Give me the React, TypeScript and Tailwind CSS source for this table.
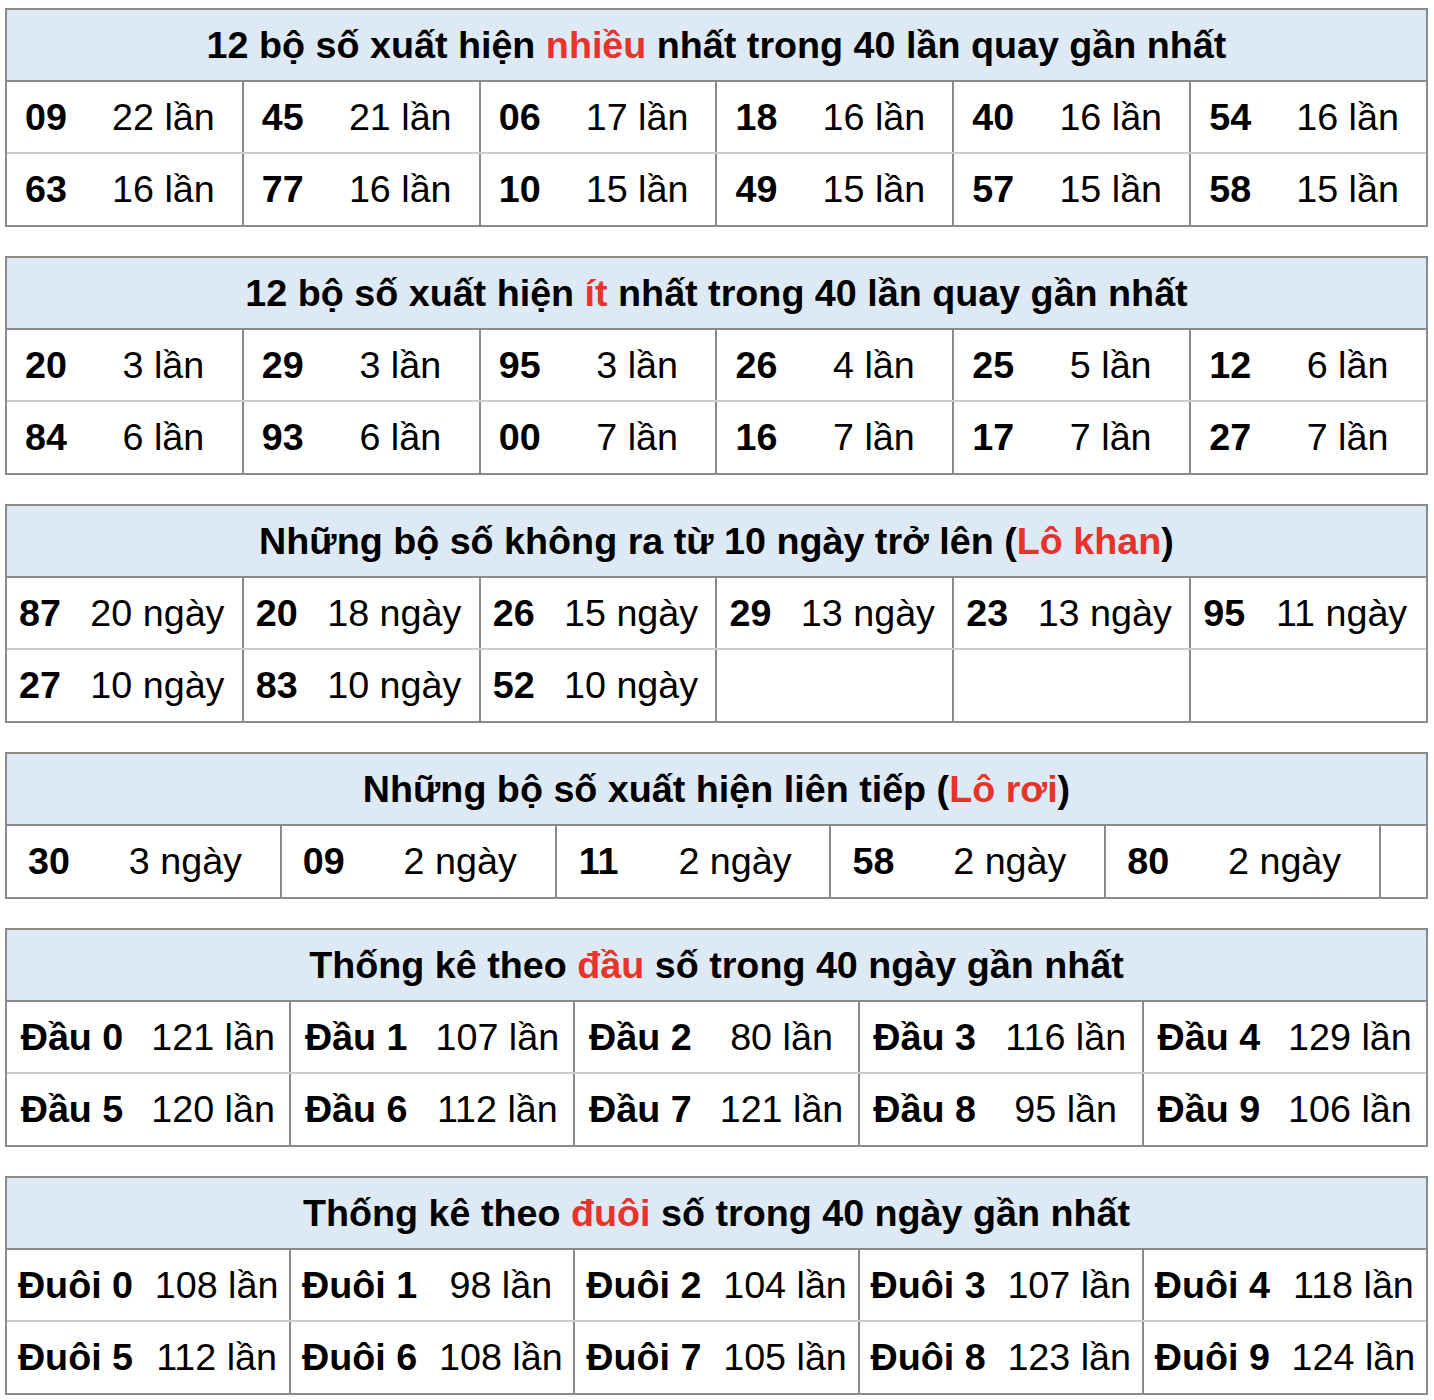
import React from 'react';

type Item = [string, string];

const font = { fontFamily: '"Liberation Sans", Arial, sans-serif' };

const Title = ({ pre, hot, post }: { pre: string; hot: string; post: string }) => (
  <div className="h-[72px] bg-[#ddeaf6] border-b-2 border-[#8a8a8a] flex items-center justify-center text-[37.7px] font-bold text-black">
    <span>
      {pre}
      <span className="text-[#e8332a]">{hot}</span>
      {post}
    </span>
  </div>
);

const Row = ({
  items,
  slots,
  numW,
  last,
  tail,
}: {
  items: (Item | null)[];
  slots: number;
  numW: string;
  last?: boolean;
  tail?: boolean;
}) => (
  <div className={`flex ${last ? 'h-[71px]' : 'h-[72px] border-b-2 border-[#cccccc]'}`}>
    {Array.from({ length: slots }).map((_, i) => {
      const it = items[i];
      return (
        <div
          key={i}
          className={`flex-1 flex items-center text-[37.7px] text-black ${i > 0 ? 'border-l-2 border-[#8a8a8a]' : ''}`}
        >
          {it && (
            <>
              <div className={`${numW} shrink-0 text-center font-bold`}>{it[0]}</div>
              <div className="flex-1 text-center whitespace-nowrap">{it[1]}</div>
            </>
          )}
        </div>
      );
    })}
    {tail && <div className="w-[47px] shrink-0 border-l-2 border-[#8a8a8a]" />}
  </div>
);

const Table = ({
  pre,
  hot,
  post,
  rows,
  slots,
  numW,
  tail,
}: {
  pre: string;
  hot: string;
  post: string;
  rows: (Item | null)[][];
  slots: number;
  numW: string;
  tail?: boolean;
}) => (
  <div className="border-2 border-[#8a8a8a] bg-white">
    <Title pre={pre} hot={hot} post={post} />
    {rows.map((r, i) => (
      <Row key={i} items={r} slots={slots} numW={numW} last={i === rows.length - 1} tail={tail} />
    ))}
  </div>
);

const L = (n: string, c: string | number): Item => [n, `${c} lần`];
const N = (n: string, c: number): Item => [n, `${c} ngày`];

export default function App() {
  const most = [
    [L('09', 22), L('45', 21), L('06', 17), L('18', 16), L('40', 16), L('54', 16)],
    [L('63', 16), L('77', 16), L('10', 15), L('49', 15), L('57', 15), L('58', 15)],
  ];
  const least = [
    [L('20', 3), L('29', 3), L('95', 3), L('26', 4), L('25', 5), L('12', 6)],
    [L('84', 6), L('93', 6), L('00', 7), L('16', 7), L('17', 7), L('27', 7)],
  ];
  const khan = [
    [N('87', 20), N('20', 18), N('26', 15), N('29', 13), N('23', 13), N('95', 11)],
    [N('27', 10), N('83', 10), N('52', 10), null, null, null],
  ];
  const roi = [[N('30', 3), N('09', 2), N('11', 2), N('58', 2), N('80', 2)]];
  const dau = [
    [L('Đầu 0', 121), L('Đầu 1', 107), L('Đầu 2', 80), L('Đầu 3', 116), L('Đầu 4', 129)],
    [L('Đầu 5', 120), L('Đầu 6', 112), L('Đầu 7', 121), L('Đầu 8', 95), L('Đầu 9', 106)],
  ];
  const duoi = [
    [L('Đuôi 0', 108), L('Đuôi 1', 98), L('Đuôi 2', 104), L('Đuôi 3', 107), L('Đuôi 4', 118)],
    [L('Đuôi 5', 112), L('Đuôi 6', 108), L('Đuôi 7', 105), L('Đuôi 8', 123), L('Đuôi 9', 124)],
  ];

  return (
    <div className="w-[1434px] bg-white pt-[8px] pl-[5px] pr-[6px]" style={font}>
      <div className="flex flex-col gap-[29px]">
        <Table pre="12 bộ số xuất hiện " hot="nhiều" post=" nhất trong 40 lần quay gần nhất" rows={most} slots={6} numW="w-[78px]" />
        <Table pre="12 bộ số xuất hiện " hot="ít" post=" nhất trong 40 lần quay gần nhất" rows={least} slots={6} numW="w-[78px]" />
        <Table pre="Những bộ số không ra từ 10 ngày trở lên (" hot="Lô khan" post=")" rows={khan} slots={6} numW="w-[66px]" />
        <Table pre="Những bộ số xuất hiện liên tiếp (" hot="Lô rơi" post=")" rows={roi} slots={5} numW="w-[84px]" tail />
        <Table pre="Thống kê theo " hot="đầu" post=" số trong 40 ngày gần nhất" rows={dau} slots={5} numW="w-[130px]" />
        <Table pre="Thống kê theo " hot="đuôi" post=" số trong 40 ngày gần nhất" rows={duoi} slots={5} numW="w-[137px]" />
      </div>
    </div>
  );
}
